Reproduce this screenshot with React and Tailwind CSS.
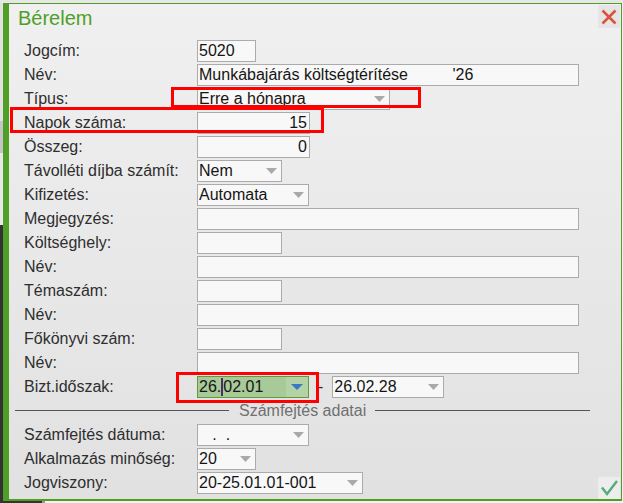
import React from "react";

const FONT = "font-['Liberation_Sans',Arial,sans-serif]";

function Arrow({ color = "#a9a9a9", w = 11, h = 6 }) {
    return (
        <svg width={w} height={h} viewBox={`0 0 ${w} ${h}`} className="shrink-0">
            <polygon points={`0,0 ${w},0 ${w / 2},${h}`} fill={color} />
        </svg>
    );
}

function Field({ width, children, right = false }) {
    return (
        <div
            className={`h-[22px] border border-[#ababab] bg-[#f8f8f8] flex items-center text-[16px] text-[#151515] whitespace-pre overflow-hidden ${right ? "justify-end pr-[2px]" : "pl-[1px]"}`}
            style={{ width }}
        >
            {children}
        </div>
    );
}

function Select({ width, children }) {
    return (
        <div
            className="h-[22px] border border-[#ababab] bg-[#f8f8f8] flex items-center text-[16px] text-[#151515] whitespace-pre pl-[1px] pr-[4px]"
            style={{ width }}
        >
            <span className="flex-1 overflow-hidden">{children}</span>
            <Arrow />
        </div>
    );
}

function Row({ label, children }) {
    return (
        <div className="flex items-center h-[22px]">
            <div className="w-[173px] text-[16px] text-[#2e2e2e] whitespace-nowrap">{label}</div>
            {children}
        </div>
    );
}

export default function App() {
    return (
        <div className={`relative w-[623px] h-[503px] overflow-hidden flex flex-col bg-[#e6e6e6] ${FONT}`}>
            {/* strip of the window behind */}
            <div className="h-[3px] bg-[#e6e6e6]" />

            <div className="flex h-[498px]">
                <div className="w-[3px] bg-[linear-gradient(to_bottom,#e2e2e2_0,#e2e2e2_118px,#c4c4c4_118px,#c4c4c4_150px,#e8e8e8_150px,#e8e8e8_222px,#333333_222px)]" />

                {/* Dialog */}
                <div className="relative w-[619px] h-[498px] border-l-[6px] border-t border-r border-b-2 border-[#4f9e25] bg-[linear-gradient(to_bottom,#f0f0f0,#e1e1e1)] flex flex-col">
                    {/* Header */}
                    <div className="flex items-start justify-between h-[36px]">
                        <h1 className="pl-[9px] pt-[3px] text-[20px] leading-[23px] text-[#4e9f27]">Bérelem</h1>
                        <button className="mt-[1px] mr-[1px] w-[22px] h-[23px] bg-[#e5e5e5] flex items-center justify-center">
                            <svg width="16" height="16" viewBox="0 0 16 16">
                                <path d="M1.5 1.5 L14.5 14.5 M14.5 1.5 L1.5 14.5" stroke="#d8553c" strokeWidth="2.6" />
                            </svg>
                        </button>
                    </div>

                    {/* Form */}
                    <div className="flex flex-col gap-[2px] pl-[15px]">
                        <Row label="Jogcím:"><Field width={59}>5020</Field></Row>
                        <Row label="Név:"><Field width={382}>{"Munkábajárás költségtérítése          '26"}</Field></Row>
                        <Row label="Típus:"><Select width={193}>Erre a hónapra</Select></Row>
                        <Row label="Napok száma:"><Field width={113} right>15</Field></Row>
                        <Row label="Összeg:"><Field width={113} right>0</Field></Row>
                        <Row label="Távolléti díjba számít:"><Select width={85}>Nem</Select></Row>
                        <Row label="Kifizetés:"><Select width={112}>Automata</Select></Row>
                        <Row label="Megjegyzés:"><Field width={382} /></Row>
                        <Row label="Költséghely:"><Field width={85} /></Row>
                        <Row label="Név:"><Field width={382} /></Row>
                        <Row label="Témaszám:"><Field width={85} /></Row>
                        <Row label="Név:"><Field width={382} /></Row>
                        <Row label="Főkönyvi szám:"><Field width={85} /></Row>
                        <Row label="Név:"><Field width={382} /></Row>
                        <Row label="Bizt.időszak:">
                            <div className="w-[112px] h-[22px] border border-[#5c9c3c] bg-[#a7ca98] flex items-center text-[16px] text-[#151515]">
                                <span className="flex-1 pl-[1px] flex items-center">
                                    26.<span className="inline-block w-[2px] h-[18px] bg-[#4b2d6e]" />02.01
                                </span>
                                <span className="w-[22px] h-full bg-[#b3d2a5] flex items-center justify-center">
                                    <Arrow color="#3a78c0" w={12} h={6} />
                                </span>
                            </div>
                            <span className="ml-[9px] text-[16px] text-[#2e2e2e]">-</span>
                            <div className="ml-[9px]"><Select width={112}>26.02.28</Select></div>
                        </Row>

                        {/* Separator */}
                        <div className="flex items-center h-[22px] -ml-[9px]">
                            <div className="w-[214px] h-px bg-[#555] -mt-[1px]" />
                            <span className="ml-[10px] text-[16px] leading-none text-[#707070]">Számfejtés adatai</span>
                            <div className="ml-[9px] w-[215px] h-px bg-[#555] -mt-[1px]" />
                        </div>

                        <Row label="Számfejtés dátuma:"><Select width={112}>{"   .  ."}</Select></Row>
                        <Row label="Alkalmazás minőség:"><Select width={59}>20</Select></Row>
                        <Row label="Jogviszony:"><Select width={166}>20-25.01.01-001</Select></Row>
                    </div>

                    {/* OK button */}
                    <button className="absolute right-[1px] bottom-[0px] w-[22px] h-[22px] bg-[#ededed] flex items-center justify-center">
                        <svg width="17" height="16" viewBox="0 0 17 16">
                            <path d="M1 7.5 L6 14 L16 1" fill="none" stroke="#58aa79" strokeWidth="2.4" />
                        </svg>
                    </button>
                </div>

                <div className="w-px bg-[#efefef]" />
            </div>

            <div className="h-[2px] bg-[linear-gradient(to_right,#333_0,#333_42px,#9a9a9a_42px,#9a9a9a_45px,#f2f2f2_45px)]" />

            {/* Annotation boxes */}
            <div className="absolute left-[171px] top-[87px] w-[250px] h-[21px] border-[3px] border-[#ff0000] pointer-events-none" />
            <div className="absolute left-[10px] top-[107px] w-[314px] h-[26px] border-[3px] border-[#ff0000] pointer-events-none" />
            <div className="absolute left-[176px] top-[372px] w-[143px] h-[31px] border-[3px] border-[#ff0000] pointer-events-none" />
        </div>
    );
}
